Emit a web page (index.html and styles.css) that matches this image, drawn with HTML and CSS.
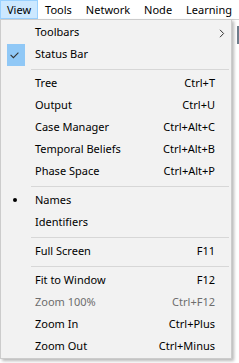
FILE: index.html
```html
<!DOCTYPE html>
<html>
<head>
<meta charset="utf-8">
<link rel="stylesheet" href="styles.css">
</head>
<body>
<div class="menubar">
  <span class="mb-item active">View</span>
  <span class="mb-item">Tools</span>
  <span class="mb-item">Network</span>
  <span class="mb-item">Node</span>
  <span class="mb-item">Learning</span>
</div>
<div class="workspace">
  <div class="peek"></div>
</div>
<div class="popup">
  <div class="row">
    <span class="icon"></span><span class="label">Toolbars</span><span class="key"></span>
    <svg class="chev" width="6" height="9" viewBox="0 0 6 9"><polyline points="1,0.8 4.6,4.5 1,8.2" fill="none" stroke="#333" stroke-width="1"/></svg>
  </div>
  <div class="row">
    <span class="icon checked"><svg class="tick" width="9" height="7" viewBox="0 0 9 7"><polyline points="0.6,2.8 3.4,5.6 8.4,0.6" fill="none" stroke="#333" stroke-width="1.1"/></svg></span><span class="label">Status Bar</span><span class="key"></span>
  </div>
  <div class="sep"></div>
  <div class="row"><span class="icon"></span><span class="label">Tree</span><span class="key">Ctrl+T</span></div>
  <div class="row"><span class="icon"></span><span class="label">Output</span><span class="key">Ctrl+U</span></div>
  <div class="row"><span class="icon"></span><span class="label">Case Manager</span><span class="key">Ctrl+Alt+C</span></div>
  <div class="row"><span class="icon"></span><span class="label">Temporal Beliefs</span><span class="key">Ctrl+Alt+B</span></div>
  <div class="row"><span class="icon"></span><span class="label">Phase Space</span><span class="key">Ctrl+Alt+P</span></div>
  <div class="sep"></div>
  <div class="row"><span class="icon"><span class="bullet"></span></span><span class="label">Names</span><span class="key"></span></div>
  <div class="row"><span class="icon"></span><span class="label">Identifiers</span><span class="key"></span></div>
  <div class="sep"></div>
  <div class="row"><span class="icon"></span><span class="label">Full Screen</span><span class="key">F11</span></div>
  <div class="sep"></div>
  <div class="row"><span class="icon"></span><span class="label">Fit to Window</span><span class="key">F12</span></div>
  <div class="row disabled"><span class="icon"></span><span class="label">Zoom 100%</span><span class="key">Ctrl+F12</span></div>
  <div class="row"><span class="icon"></span><span class="label">Zoom In</span><span class="key">Ctrl+Plus</span></div>
  <div class="row"><span class="icon"></span><span class="label">Zoom Out</span><span class="key">Ctrl+Minus</span></div>
</div>
</body>
</html>
```

FILE: styles.css
```css
html, body {
  margin: 0;
  padding: 0;
  background: #ffffff;
  font-family: "Noto Sans", "Open Sans", sans-serif;
  font-size: 11px;
  color: #000;
  overflow: hidden;
}

.menubar {
  display: flex;
  height: 19px;
  background: #ffffff;
  border-bottom: 1px solid #d4d4d4;
}

.mb-item {
  padding: 0 7px;
  line-height: 19px;
  white-space: nowrap;
}

.mb-item.active {
  background: #cce8ff;
  box-shadow: inset 0 0 0 1px #99d1ff;
}

.workspace {
  display: flex;
  justify-content: flex-end;
  padding-top: 6px;
  height: 340px;
  background: #ffffff;
}

.peek {
  width: 2px;
  height: 18px;
  background: #6f7d8c;
}

.popup {
  position: absolute;
  top: 19px;
  left: 0;
  width: 232px;
  box-sizing: border-box;
  background: #f2f2f2;
  border: 1px solid #cccccc;
  padding: 2px 0 0 0;
  box-shadow: 2px 2px 3px rgba(0, 0, 0, 0.28);
}

.row {
  display: flex;
  align-items: center;
  height: 22px;
  padding-right: 16px;
  position: relative;
}

.icon {
  flex: none;
  width: 18px;
  height: 22px;
  margin-left: 6px;
  margin-right: 10px;
  display: flex;
  align-items: center;
  justify-content: center;
}

.icon.checked {
  background: #90c8f6;
}

.tick {
  margin-left: -3px;
  margin-top: 1px;
}

.bullet {
  width: 4px;
  height: 4px;
  border-radius: 50%;
  background: #000;
  margin-left: -2px;
  margin-top: -3px;
}

.label {
  flex: 1;
  line-height: 20px;
  padding-bottom: 2px;
  white-space: nowrap;
}

.key {
  line-height: 20px;
  padding-bottom: 2px;
  white-space: nowrap;
}

.chev {
  position: absolute;
  right: 6px;
  top: 7px;
}

.disabled {
  color: #6d6d6d;
}

.sep {
  height: 1px;
  background: #d7d7d7;
  margin: 3px 2px 3px 30px;
}
```
